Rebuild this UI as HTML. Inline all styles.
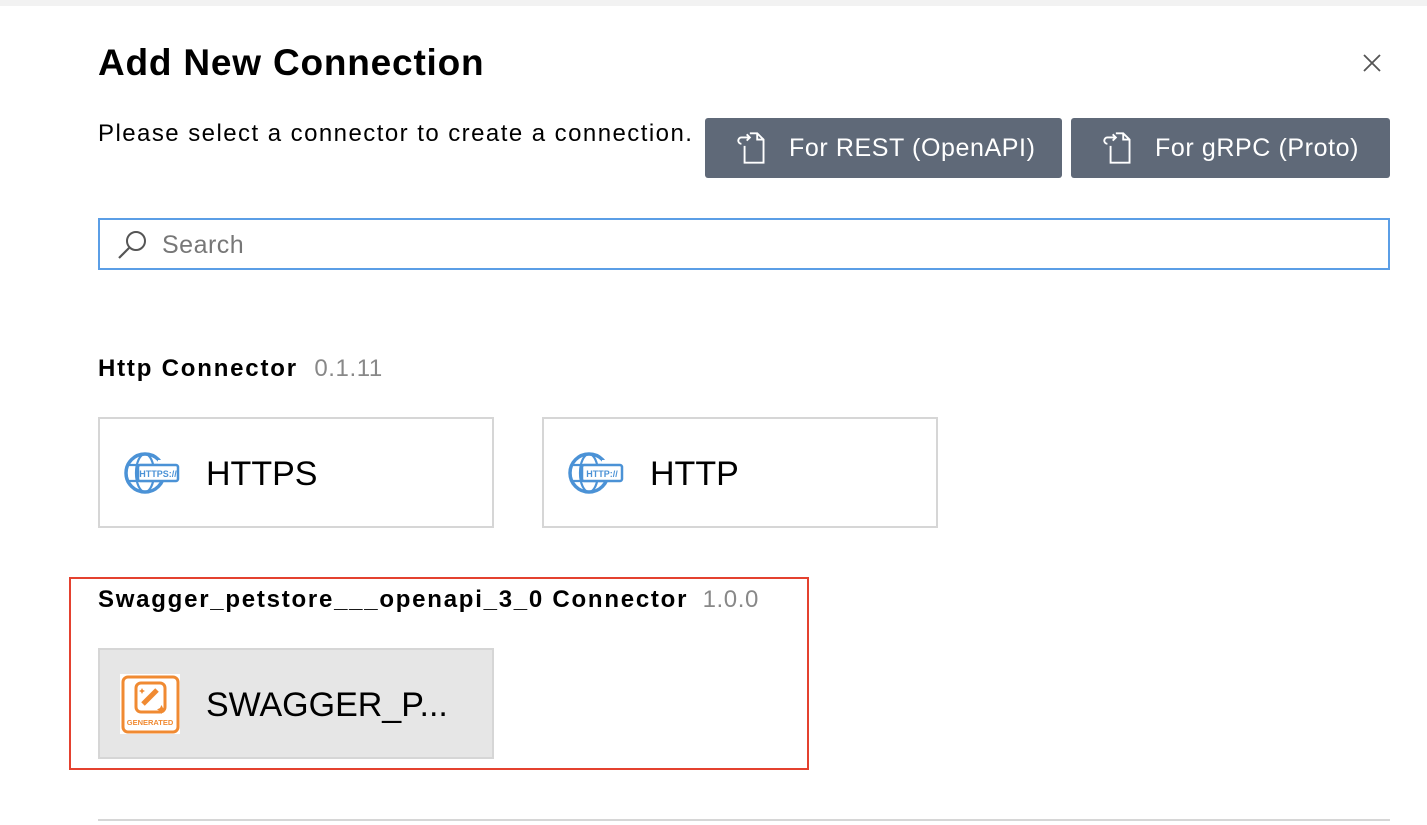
<!DOCTYPE html>
<html><head><meta charset="utf-8"><style>
body{margin:0;width:1427px;height:825px;background:#fff;font-family:"Liberation Sans",sans-serif;position:relative;overflow:hidden;color:#000}
.a{position:absolute}
.btn{position:absolute;top:118px;height:60px;background:#5f6978;border-radius:3px;color:#fff;font-size:25px;display:flex;align-items:center;letter-spacing:0.6px}
.card{position:absolute;width:396px;height:111px;border:2px solid #d6d6d6;box-sizing:border-box;background:#fff;display:flex;align-items:center}
.card span{font-size:34px;margin-left:22px;position:relative;top:2px}
</style></head><body>
<div class="a" style="left:0;top:0;width:1427px;height:6px;background:#f2f2f2"></div>
<div class="a" style="left:98px;top:42px;font-size:37px;font-weight:bold;letter-spacing:0.8px">Add New Connection</div>
<svg class="a" style="left:1362px;top:53px" width="20" height="20" viewBox="0 0 20 20"><path d="M2 2L18 18M18 2L2 18" stroke="#555" stroke-width="1.8"/></svg>
<div class="a" style="left:98px;top:120px;font-size:24px;letter-spacing:1.45px">Please select a connector to create a connection.</div>
<div class="btn" style="left:705px;width:357px"><svg style="margin-left:28px" width="40" height="38" viewBox="0 0 38 36"><path d="M16 4h7l6 6v22h-18v-16M23 4v6h6" fill="none" stroke="#fff" stroke-width="1.8"/><path d="M16 8h-8a3 3 0 0 0 0 6M13 5l3 3-3 3" fill="none" stroke="#fff" stroke-width="1.8"/></svg><span style="margin-left:16px">For REST (OpenAPI)</span></div>
<div class="btn" style="left:1071px;width:319px"><svg style="margin-left:28px" width="40" height="38" viewBox="0 0 38 36"><path d="M16 4h7l6 6v22h-18v-16M23 4v6h6" fill="none" stroke="#fff" stroke-width="1.8"/><path d="M16 8h-8a3 3 0 0 0 0 6M13 5l3 3-3 3" fill="none" stroke="#fff" stroke-width="1.8"/></svg><span style="margin-left:16px">For gRPC (Proto)</span></div>
<div class="a" style="left:98px;top:218px;width:1292px;height:52px;border:2px solid #5b9ee6;box-sizing:border-box"></div>
<svg class="a" style="left:116px;top:229px" width="34" height="32" viewBox="0 0 34 32"><circle cx="20" cy="12" r="9" fill="none" stroke="#555" stroke-width="2"/><path d="M13 19L3 29" stroke="#555" stroke-width="2.2"/></svg>
<div class="a" style="left:162px;top:231px;font-size:25px;color:#777;letter-spacing:0.5px">Search</div>
<div class="a" style="left:98px;top:355px;font-size:24px;font-weight:bold;letter-spacing:1.8px">Http Connector <span style="font-weight:normal;color:#888;margin-left:8px;letter-spacing:0.6px">0.1.11</span></div>
<div class="card" style="left:98px;top:417px"><svg style="margin-left:22px" width="60" height="54" viewBox="0 0 60 54">
<circle cx="23" cy="27" r="19" fill="none" stroke="#4b92d6" stroke-width="3.5"/>
<ellipse cx="23" cy="27" rx="9" ry="19" fill="none" stroke="#4b92d6" stroke-width="2.2"/>
<path d="M6 19h34M6 35h34" stroke="#4b92d6" stroke-width="2.2"/>
<rect x="36" y="14" width="14" height="8" fill="#fff"/>
<rect x="16" y="19" width="40" height="16" rx="2" fill="#fff" stroke="#4b92d6" stroke-width="2.5"/><text x="36" y="31" font-size="9" font-weight="bold" text-anchor="middle" fill="#4b92d6" font-family="Liberation Sans">HTTPS://</text></svg><span style="margin-left:24px">HTTPS</span></div>
<div class="card" style="left:542px;top:417px"><svg style="margin-left:22px" width="60" height="54" viewBox="0 0 60 54">
<circle cx="23" cy="27" r="19" fill="none" stroke="#4b92d6" stroke-width="3.5"/>
<ellipse cx="23" cy="27" rx="9" ry="19" fill="none" stroke="#4b92d6" stroke-width="2.2"/>
<path d="M6 19h34M6 35h34" stroke="#4b92d6" stroke-width="2.2"/>
<rect x="36" y="14" width="14" height="8" fill="#fff"/>
<rect x="16" y="19" width="40" height="16" rx="2" fill="#fff" stroke="#4b92d6" stroke-width="2.5"/><text x="36" y="31" font-size="9" font-weight="bold" text-anchor="middle" fill="#4b92d6" font-family="Liberation Sans">HTTP://</text></svg><span style="margin-left:24px">HTTP</span></div>
<div class="a" style="left:69px;top:577px;width:740px;height:193px;border:2px solid #e4412f;box-sizing:border-box"></div>
<div class="a" style="left:98px;top:586px;font-size:24px;font-weight:bold;letter-spacing:1.75px">Swagger_petstore___openapi_3_0 Connector <span style="font-weight:normal;color:#888;margin-left:6px;letter-spacing:0.6px">1.0.0</span></div>
<div class="card" style="left:98px;top:648px;background:#e6e6e6"><div style="margin-left:20px;width:60px;height:60px;background:#fff;position:relative"><svg width="60" height="60" viewBox="0 0 60 60"><rect x="3" y="3" width="55" height="55" rx="5" fill="none" stroke="#f08a32" stroke-width="3"/><rect x="16" y="9" width="29" height="29" rx="5" fill="none" stroke="#f08a32" stroke-width="3"/><path d="M23 30L37 16" stroke="#f08a32" stroke-width="5"/><path d="M40 34l1.5-3 1.5 3 3 1.5-3 1.5-1.5 3-1.5-3-3-1.5z M22 14l1 2 2 1-2 1-1 2-1-2-2-1 2-1z" fill="#f08a32"/><text x="30" y="51" font-size="7.5" font-weight="bold" text-anchor="middle" fill="#f08a32" font-family="Liberation Sans">GENERATED</text></svg></div><span style="margin-left:26px">SWAGGER_P...</span></div>
<div class="a" style="left:98px;top:819px;width:1292px;height:2px;background:#d6d6d6"></div>
</body></html>
